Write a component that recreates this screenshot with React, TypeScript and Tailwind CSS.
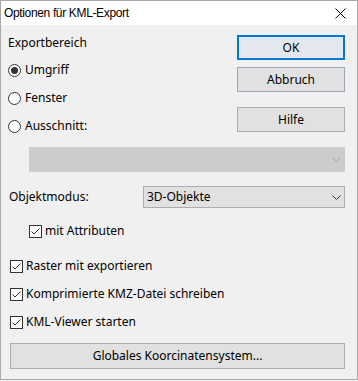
import React from 'react';

const font = { fontFamily: '"Noto Sans", "Liberation Sans", sans-serif' };

function Radio({ checked, label }: { checked?: boolean; label: string }) {
  return (
    <div className="flex h-[16px] items-center">
      <span className="flex h-[13px] w-[13px] items-center justify-center rounded-full border border-[#333333] bg-white">
        {checked && <span className="h-[7px] w-[7px] rounded-full bg-[#333333]" />}
      </span>
      <span className="ml-[4px] text-[12px] leading-none text-black">{label}</span>
    </div>
  );
}

function Check({ label }: { label: string }) {
  return (
    <div className="flex h-[16px] items-center">
      <span className="flex h-[13px] w-[13px] items-center justify-center border border-[#333333] bg-white">
        <svg width="11" height="11" viewBox="0 0 11 11">
          <path d="M1.5 5.5 L4 8 L9.5 2.5" fill="none" stroke="#333333" strokeWidth="1" />
        </svg>
      </span>
      <span className="ml-[3px] text-[12px] leading-none text-black">{label}</span>
    </div>
  );
}

function Chevron({ color }: { color: string }) {
  return (
    <svg width="9" height="5" viewBox="0 0 9 5">
      <path d="M0.5 0.5 L4.5 4.5 L8.5 0.5" fill="none" stroke={color} strokeWidth="1" />
    </svg>
  );
}

export default function App() {
  return (
    <div className="h-[381px] w-[358px] bg-[#f4f4f4]" style={font}>
      <div className="flex h-[380px] w-[358px] flex-col border border-[#a8a8a8] bg-[#f0f0f0]">
        {/* Titelleiste */}
        <div className="flex h-[24px] shrink-0 items-center justify-between bg-white pl-[3px] pr-[11px]">
          <span className="text-[12px] tracking-[-0.35px] text-black" style={{ fontFamily: '"Liberation Sans", sans-serif' }}>
            Optionen für KML-Export
          </span>
          <svg width="11" height="11" viewBox="0 0 11 11">
            <path d="M0.5 0.5 L10.5 10.5 M10.5 0.5 L0.5 10.5" stroke="#000" strokeWidth="1" />
          </svg>
        </div>

        <div className="flex flex-col pl-[7px] pr-[12px] pt-[10px]">
          {/* Exportbereich + Buttons */}
          <div className="flex justify-between">
            <div className="flex flex-col">
              <div className="flex h-[16px] items-center text-[12px] leading-none text-black">Exportbereich</div>
              <div className="mt-[11px] flex flex-col gap-[12px]">
                <Radio checked label="Umgriff" />
                <Radio label="Fenster" />
                <Radio label="Ausschnitt:" />
              </div>
            </div>
            <div className="flex w-[108px] flex-col">
              <button className="h-[25px] border-2 border-[#0078d7] bg-[#e3e8ee] text-[12px] font-normal text-black">OK</button>
              <button className="mt-[7px] h-[25px] border border-[#9aa7b4] bg-[#e1e1e1] text-[12px] font-normal text-black">Abbruch</button>
              <button className="mt-[15px] h-[25px] border border-[#adadad] bg-[#e1e1e1] text-[12px] font-normal text-black">Hilfe</button>
            </div>
          </div>

          {/* deaktivierte Auswahl */}
          <div className="ml-[21px] mt-[13px] flex h-[25px] items-center justify-end border border-[#cccccc] bg-[#cccccc] pr-[3px]">
            <Chevron color="#a6a6a6" />
          </div>

          {/* Objektmodus */}
          <div className="mt-[14px] flex items-center justify-between">
            <span className="ml-[1px] text-[12px] leading-none text-black">Objektmodus:</span>
            <div className="flex h-[22px] w-[202px] items-center justify-between border border-[#adadad] bg-[#e1e1e1] pl-[3px] pr-[3px]">
              <span className="text-[12px] leading-none text-black">3D-Objekte</span>
              <Chevron color="#333333" />
            </div>
          </div>

          <div className="ml-[21px] mt-[15px]">
            <Check label="mit Attributen" />
          </div>

          <div className="ml-[2px] mt-[19px] flex flex-col gap-[12px]">
            <Check label="Raster mit exportieren" />
            <Check label="Komprimierte KMZ-Datei schreiben" />
            <Check label="KML-Viewer starten" />
          </div>

          <button className="ml-[2px] mt-[13px] h-[26px] border border-[#adadad] bg-[#e1e1e1] text-[12px] font-normal text-black">
            Globales Koorcinatensystem...
          </button>
        </div>
      </div>
    </div>
  );
}
